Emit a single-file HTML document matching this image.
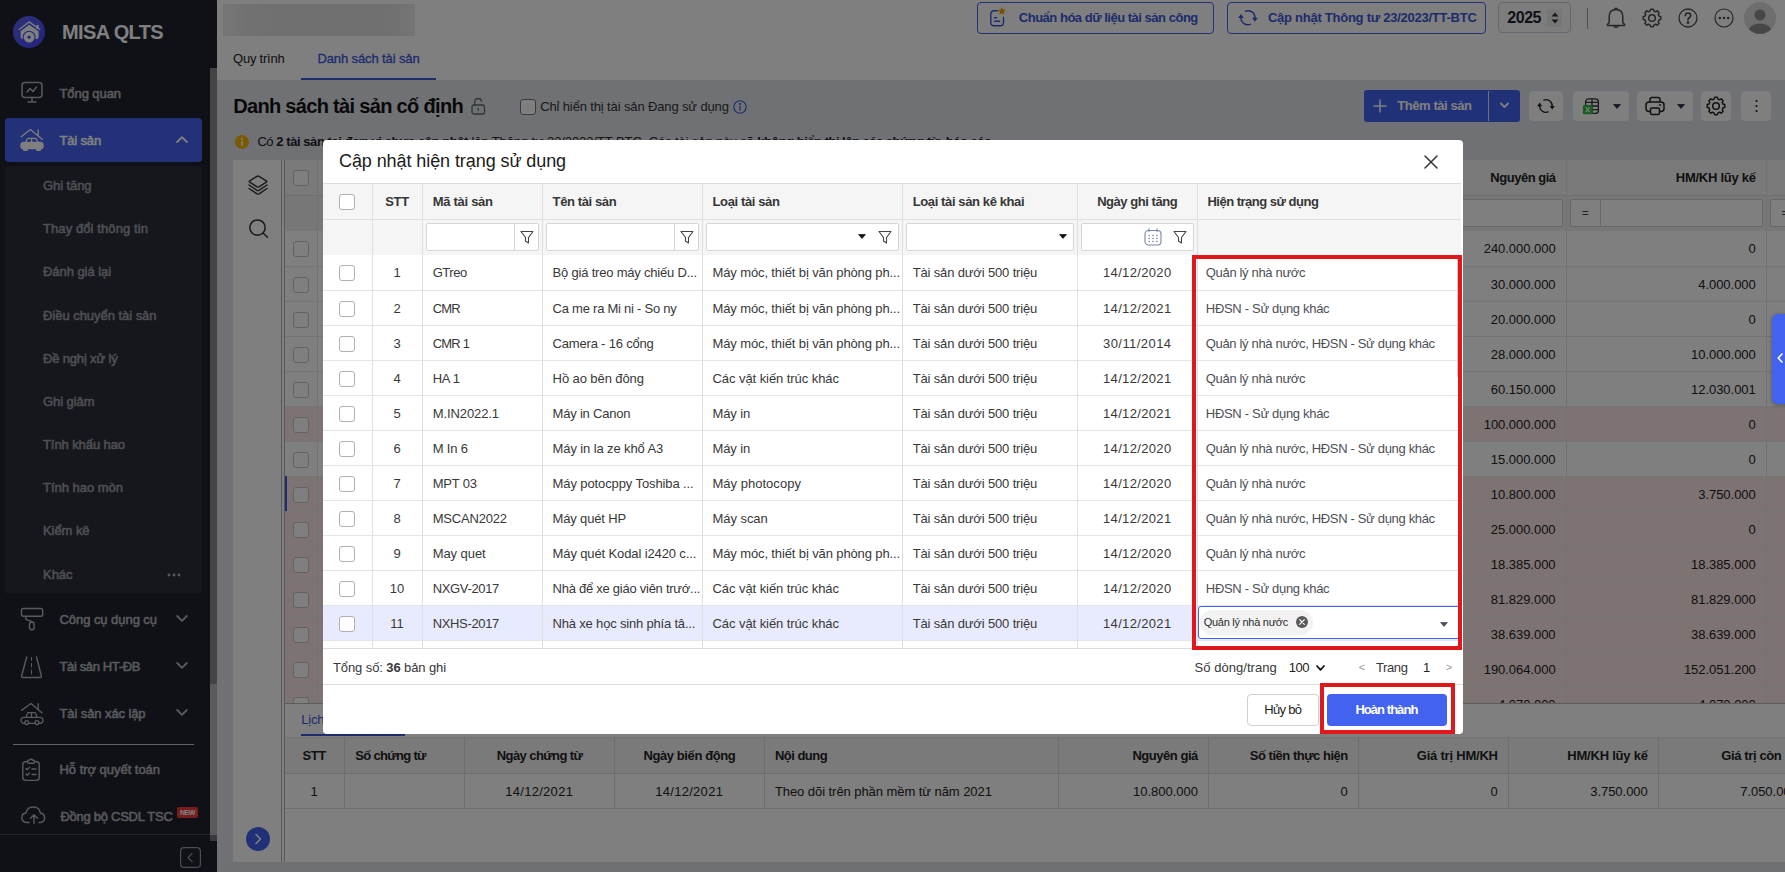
<!DOCTYPE html><html lang="vi"><head><meta charset="utf-8"><title>MISA QLTS</title><style>
*{box-sizing:border-box;margin:0;padding:0}
html,body{width:1785px;height:872px;overflow:hidden;background:#fff}
body{font-family:"Liberation Sans",sans-serif;font-size:13px;color:#1f1f1f;position:relative}
.abs{position:absolute}
.t{position:absolute;white-space:nowrap;line-height:1}
.b{font-weight:bold}
svg{position:absolute;overflow:visible}
#sidebar{position:absolute;left:0;top:0;width:217px;height:872px;background:#20222c}
#main{position:absolute;left:217px;top:0;width:1568px;height:872px;background:#e1e3e9}
#overlay{position:absolute;left:0;top:0;width:1785px;height:872px;background:rgba(0,0,0,.5)}
.sm{color:#9a9daa;font-size:14px}
.mi{color:#b0b3bf;font-size:14px}
#modal{position:absolute;left:323px;top:140px;width:1140px;height:594px;background:#fff;border-radius:4px;overflow:hidden}
.cb{position:absolute;width:16px;height:16px;border:1px solid #afafaf;border-radius:3px;background:#fff}
.vl{position:absolute;width:1px;background:#e0e0e0}
.hl{position:absolute;height:1px;background:#e0e0e0}
.mrow{position:absolute;left:0;width:1134px;height:35px;border-bottom:1px solid #e6e6e6}
.c{position:absolute;top:0;height:34px;line-height:34px;white-space:nowrap;overflow:hidden;text-overflow:ellipsis;font-size:13px;color:#333}
.fi{position:absolute;height:28px;border:1px solid #d6d6d6;border-radius:2px;background:#fff}
.bgc{position:absolute;white-space:nowrap;font-size:13px;color:#212121;line-height:35px;height:35px}
.btn{position:absolute;border-radius:4px;background:#fff;box-shadow:0 0 1px rgba(0,0,0,.15)}
</style></head><body>
<div id="sidebar">
<svg style="left:13px;top:16px" width="32" height="32" viewBox="0 0 32 32"><defs><linearGradient id="lg" x1="0" y1="0" x2="1" y2="1"><stop offset="0" stop-color="#5a66f0"/><stop offset="1" stop-color="#4a44ff"/></linearGradient></defs><circle cx="16" cy="16" r="16" fill="url(#lg)"/><path d="M5.800 13.800 L16.100 5.900 L27.200 13.800" fill="none" stroke="#fff" stroke-width="1.300" stroke-linejoin="round"/><rect x="23.400" y="9" width="2.300" height="3.800" fill="#fff"/><path d="M7.700 15.200 L16.100 8.800 L25.600 15.200 V20.500 Q25.600 23.100 23 23.100 H10.300 Q7.700 23.100 7.700 20.500 Z" fill="#fff"/><circle cx="16.100" cy="21.200" r="6.500" fill="#4d50f5"/><circle cx="16.100" cy="21.200" r="5.400" fill="#fff"/><rect x="14.700" y="19.800" width="2.800" height="2.800" transform="rotate(45 16.100 21.200)" fill="#4d50f5"/></svg>
<div class="t" style="font-size:20px;color:#fff;top:21.5px;font-weight:bold;letter-spacing:-0.630px;left:62.0px;">MISA QLTS</div>
<svg style="left:21px;top:81px" width="24" height="24" viewBox="0 0 24 24" fill="none" stroke="#b0b3bf" stroke-width="1.500" stroke-linecap="round" stroke-linejoin="round"><rect x="1" y="1.500" width="20" height="15" rx="3"/><path d="M6 11 L9 7.500 L12 10.500 L15.500 6"/><path d="M11 16.500 V21 M7 21 H15"/></svg>
<div class="t" style="font-size:13px;color:#b3b5bb;top:86.5px;letter-spacing:-0.075px;left:59.5px;-webkit-text-stroke:0.55px currentColor;">Tổng quan</div>
<div class="abs" style="left:5px;top:118px;width:197px;height:44px;background:#4562f0;border-radius:4px"></div>
<svg style="left:19px;top:127px" width="26" height="26" viewBox="0 0 26 26" fill="none" stroke="#fff" stroke-width="1.300" stroke-linecap="round" stroke-linejoin="round"><path d="M2.200 9.700 L11.400 2.600 L23.500 12.400 M19.200 2.800 V8.600"/><path d="M6.500 15.500 L8.200 12 Q8.600 11.300 9.600 11.300 H15.800 Q16.800 11.300 17.300 12 L19 15.500 M12.600 11.300 V15.500" /><path d="M2 18 Q2 15.500 5 15.500 H21 Q24 15.500 24 18 V19.500 Q24 21.700 21.500 21.700 H4.500 Q2 21.700 2 19.500 Z" fill="#fff"/><path d="M4.800 21.700 V23.300 H8.200 V21.700 M17.800 21.700 V23.300 H21.200 V21.700" fill="#fff"/></svg>
<div class="t" style="font-size:13px;color:#fff;top:133.5px;letter-spacing:-0.163px;left:59.5px;-webkit-text-stroke:0.55px currentColor;">Tài sản</div>
<svg style="left:175.500px;top:136px" width="12" height="7" viewBox="0 0 12 7" fill="none" stroke="#fff" stroke-width="1.900" stroke-linecap="round" stroke-linejoin="round"><path d="M1.200 6 L6 1.200 L10.800 6"/></svg>
<div class="abs" style="left:5px;top:166px;width:197px;height:428px;background:#2c2f3b;border-radius:4px"></div>
<div class="t" style="font-size:13px;color:#9c9ea6;top:178.5px;letter-spacing:-0.082px;left:43.0px;-webkit-text-stroke:0.55px currentColor;">Ghi tăng</div>
<div class="t" style="font-size:13px;color:#9c9ea6;top:221.5px;letter-spacing:0.091px;left:43.0px;-webkit-text-stroke:0.55px currentColor;">Thay đổi thông tin</div>
<div class="t" style="font-size:13px;color:#9c9ea6;top:264.5px;letter-spacing:-0.055px;left:43.0px;-webkit-text-stroke:0.55px currentColor;">Đánh giá lại</div>
<div class="t" style="font-size:13px;color:#9c9ea6;top:308.5px;letter-spacing:-0.036px;left:43.0px;-webkit-text-stroke:0.55px currentColor;">Điều chuyển tài sản</div>
<div class="t" style="font-size:13px;color:#9c9ea6;top:351.5px;letter-spacing:-0.163px;left:43.0px;-webkit-text-stroke:0.55px currentColor;">Đề nghị xử lý</div>
<div class="t" style="font-size:13px;color:#9c9ea6;top:394.5px;letter-spacing:-0.066px;left:43.0px;-webkit-text-stroke:0.55px currentColor;">Ghi giảm</div>
<div class="t" style="font-size:13px;color:#9c9ea6;top:437.5px;letter-spacing:-0.087px;left:43.0px;-webkit-text-stroke:0.55px currentColor;">Tính khấu hao</div>
<div class="t" style="font-size:13px;color:#9c9ea6;top:480.5px;letter-spacing:-0.018px;left:43.0px;-webkit-text-stroke:0.55px currentColor;">Tính hao mòn</div>
<div class="t" style="font-size:13px;color:#9c9ea6;top:524.0px;letter-spacing:-0.067px;left:43.0px;-webkit-text-stroke:0.55px currentColor;">Kiểm kê</div>
<div class="t" style="font-size:13px;color:#9c9ea6;top:567.5px;letter-spacing:-0.035px;left:43.0px;-webkit-text-stroke:0.55px currentColor;">Khác</div>
<svg style="left:167px;top:573px" width="14" height="4" viewBox="0 0 14 4" fill="#b0b3bf"><circle cx="2" cy="2" r="1.400"/><circle cx="7" cy="2" r="1.400"/><circle cx="12" cy="2" r="1.400"/></svg>
<svg style="left:20px;top:606px" width="26" height="26" viewBox="0 0 26 26" fill="none" stroke="#b3b5bb" stroke-width="1.400" stroke-linecap="round" stroke-linejoin="round"><rect x="1.500" y="2.500" width="21.200" height="7.800" rx="1.800"/><path d="M5.800 10.500 V12.300 Q5.800 13.500 7 13.900 L11 15.200 Q11.800 15.500 11.800 16.300"/><rect x="9.500" y="16" width="4.600" height="7.800" rx="2.300"/></svg>
<div class="t" style="font-size:13px;color:#b3b5bb;top:612.5px;letter-spacing:-0.053px;left:59.5px;-webkit-text-stroke:0.55px currentColor;">Công cụ dụng cụ</div>
<svg style="left:175.500px;top:615.2px" width="12" height="7" viewBox="0 0 12 7" fill="none" stroke="#b3b5bb" stroke-width="1.900" stroke-linecap="round" stroke-linejoin="round"><path d="M1.200 1 L6 5.800 L10.800 1"/></svg>
<svg style="left:19px;top:655px" width="26" height="26" viewBox="0 0 26 26" fill="none" stroke="#b3b5bb" stroke-width="1.400" stroke-linecap="round" stroke-linejoin="round"><path d="M7.700 2 L2.600 21 Q2.300 22.500 3.800 22.500 H21.200 Q22.700 22.500 22.400 21 L17.500 2"/><path d="M12.500 2.500 V5.500 M12.500 8.500 V12 M12.500 15 V19" stroke-width="1"/></svg>
<div class="t" style="font-size:13px;color:#b3b5bb;top:659.5px;letter-spacing:-0.365px;left:59.5px;-webkit-text-stroke:0.55px currentColor;">Tài sản HT-ĐB</div>
<svg style="left:175.500px;top:662.2px" width="12" height="7" viewBox="0 0 12 7" fill="none" stroke="#b3b5bb" stroke-width="1.900" stroke-linecap="round" stroke-linejoin="round"><path d="M1.200 1 L6 5.800 L10.800 1"/></svg>
<svg style="left:19px;top:700px" width="26" height="26" viewBox="0 0 26 26" fill="none" stroke="#b3b5bb" stroke-width="1.300" stroke-linecap="round" stroke-linejoin="round"><path d="M2.500 10.400 L12 3.500 L23.100 13 M19.200 3.700 V9.500"/><path d="M7 17.300 L8.300 13.600 Q8.600 12.600 9.600 12.600 H15.400 Q16.400 12.600 16.800 13.600 L18 17.300 M12.500 12.600 V17.300"/><rect x="2" y="17.300" width="22" height="6" rx="3"/><circle cx="7.700" cy="22.600" r="1.900" fill="#20222c"/><circle cx="18" cy="22.600" r="1.900" fill="#20222c"/></svg>
<div class="t" style="font-size:13px;color:#b3b5bb;top:706.5px;letter-spacing:-0.096px;left:59.5px;-webkit-text-stroke:0.55px currentColor;">Tài sản xác lập</div>
<svg style="left:175.500px;top:709.2px" width="12" height="7" viewBox="0 0 12 7" fill="none" stroke="#b3b5bb" stroke-width="1.900" stroke-linecap="round" stroke-linejoin="round"><path d="M1.200 1 L6 5.800 L10.800 1"/></svg>
<div class="abs" style="left:13px;top:744px;width:181px;height:1px;background:#c4c4c8"></div>
<svg style="left:20px;top:756px" width="22" height="26" viewBox="0 0 22 26" fill="none" stroke="#b3b5bb" stroke-width="1.400" stroke-linecap="round" stroke-linejoin="round"><rect x="2.800" y="5.800" width="16.400" height="18.600" rx="2.800"/><path d="M7.500 5.800 V5 Q7.500 4.300 8.500 4.300 H9.300 Q9.800 3 11 3 Q12.200 3 12.700 4.300 H13.500 Q14.500 4.300 14.500 5 V5.800 Q14.500 7.300 13.500 7.300 H8.500 Q7.500 7.300 7.500 5.800 Z" fill="#20222c"/><path d="M6 12.500 l1.300 1.300 l2.200 -2.400 M12 13 H16 M6 18 l1.300 1.300 l2.200 -2.400 M12 18.500 H16"/></svg>
<div class="t" style="font-size:13px;color:#b3b5bb;top:762.5px;letter-spacing:-0.031px;left:59.5px;-webkit-text-stroke:0.55px currentColor;">Hỗ trợ quyết toán</div>
<svg style="left:20px;top:805px" width="26" height="20" viewBox="0 0 26 20" fill="none" stroke="#b3b5bb" stroke-width="1.400" stroke-linecap="round" stroke-linejoin="round"><path d="M9 17.500 H6.500 Q1.800 17 1.800 12.500 Q1.800 8.500 6 8 Q7 2 13.300 2 Q19.500 2 20.300 8 Q24.600 8.500 24.600 13 Q24.600 17 20.500 17.500 H19"/><path d="M14 18.400 V10 M10.500 13.300 L14 9.800 L17.500 13.300"/></svg>
<div class="t" style="font-size:13px;color:#b3b5bb;top:809.5px;letter-spacing:-0.271px;left:60.5px;-webkit-text-stroke:0.55px currentColor;">Đồng bộ CSDL TSC</div>
<div class="abs" style="left:177px;top:807px;width:21px;height:11px;background:#f03a3a;border-radius:2px"></div>
<div class="t" style="font-size:7px;color:#fff;top:808.8px;font-weight:bold;letter-spacing:-0.448px;left:180.0px;">NEW</div>
<div class="abs" style="left:0;top:834px;width:210px;height:1px;background:#4a4c55"></div>
<svg style="left:179.500px;top:847px" width="21" height="21" viewBox="0 0 21 21" fill="none" stroke="#9a9ca6" stroke-width="1.200" stroke-linecap="round" stroke-linejoin="round"><rect x="0.600" y="0.600" width="19.800" height="19.800" rx="3.500"/><path d="M12 6.300 L8 10.500 L12 14.700"/></svg>
<div class="abs" style="left:210px;top:68px;width:7px;height:616px;background:#898989"></div>
<div class="abs" style="left:210px;top:684px;width:7px;height:151px;background:#b4b4b4"></div>
<div class="abs" style="left:210px;top:835px;width:7px;height:6px;background:#727272"></div>
</div>
<div id="main">
<div class="abs" style="left:0;top:0;width:1568px;height:80px;background:#fff"></div>
<div class="abs" style="left:6px;top:4px;width:192px;height:32px;background:linear-gradient(90deg,#eeeeee 0,#e2e2e2 14%,#e0e0e0 50%,#e0e0e0 84%,#eaeaea 100%)"></div>
<div class="abs" style="left:760px;top:2px;width:237px;height:32px;border:1px solid #4262f0;border-radius:4px"></div>
<svg style="left:772px;top:6px" width="18" height="22" viewBox="0 0 18 22" fill="none" stroke="#3b57d8" stroke-width="1.400" stroke-linecap="round" stroke-linejoin="round"><path d="M8.500 4.800 H5.300 Q1.800 4.800 1.800 8.300 V16.200 Q1.800 19.700 5.300 19.700 H11 Q14.500 19.700 14.500 16.200 V11.500"/><path d="M5.600 11.800 H7.600 M5.600 15.200 H10.600"/><path d="M12.900 0.900 l1.250 2.550 l2.800 .4 l-2.050 1.980 l.48 2.800 l-2.480 -1.320 l-2.480 1.320 l.48 -2.800 l-2.050 -1.980 l2.800 -.4 z" fill="#f0a20c" stroke="none"/></svg>
<div class="t" style="font-size:13px;color:#3b57d8;top:11.4px;font-weight:bold;letter-spacing:-0.487px;left:801.8px;">Chuẩn hóa dữ liệu tài sản công</div>
<div class="abs" style="left:1010px;top:2px;width:259px;height:32px;border:1px solid #4262f0;border-radius:4px"></div>
<svg style="left:1021px;top:10px" width="20" height="15.50" viewBox="0 0 20 15.500"><g fill="none" stroke="#3b57d8" stroke-width="1.5"><path d="M7 1.400 A7 7 0 0 1 16.950 8.200"/><path d="M12.900 14.100 A7 7 0 0 1 2.950 7.400"/></g><path d="M14.100 7.700 H19.800 L16.950 11.800 Z M0.100 8 H5.800 L2.950 3.900 Z" fill="#3b57d8"/></svg>
<div class="t" style="font-size:13px;color:#3b57d8;top:11.4px;font-weight:bold;letter-spacing:-0.251px;left:1050.9px;">Cập nhật Thông tư 23/2023/TT-BTC</div>
<div class="abs" style="left:1281px;top:2px;width:73px;height:31px;border:1px solid #c9cde0;border-radius:4px;background:#fbfbfb"></div>
<div class="t" style="font-size:16px;color:#1e1e2e;top:10.1px;font-weight:bold;letter-spacing:-0.473px;left:1290.3px;">2025</div>
<div class="abs" style="left:1330px;top:9px;width:15px;height:18px;background:#efefef"></div>
<svg style="left:1333.5px;top:12px" width="8" height="12" viewBox="0 0 8 12" fill="#333"><path d="M4 0.500 L7.500 4.500 H0.500 Z M4 11.500 L7.500 7.500 H0.500 Z"/></svg>
<div class="abs" style="left:1370px;top:8px;width:1px;height:21px;background:#a0a0a0"></div>
<svg style="left:1389px;top:7px" width="20" height="22" viewBox="0 0 20 22" fill="none" stroke="#4c4c50" stroke-width="1.500" stroke-linecap="round" stroke-linejoin="round"><path d="M3.200 15.500 V9.800 Q3.200 2.600 10 2.600 Q16.800 2.600 16.800 9.800 V15.500 L18.500 17.400 Q19 18.500 17.800 18.500 H2.200 Q1 18.500 1.500 17.400 Z"/><path d="M8.800 2.600 Q8.900 1.300 10 1.300 Q11.100 1.300 11.200 2.600"/><path d="M8.200 19.700 Q10 21 11.800 19.700"/></svg>
<svg style="left:1425px;top:8px" width="20" height="20" viewBox="0 0 20 20" fill="none" stroke="#4c4c50" stroke-width="1.500" stroke-linejoin="round"><path d="M8.75 1.19 L11.25 1.19 L11.95 3.07 L13.52 3.72 L15.34 2.88 L17.12 4.66 L16.28 6.48 L16.93 8.05 L18.81 8.75 L18.81 11.25 L16.93 11.95 L16.28 13.52 L17.12 15.34 L15.34 17.12 L13.52 16.28 L11.95 16.93 L11.25 18.81 L8.75 18.81 L8.05 16.93 L6.48 16.28 L4.66 17.12 L2.88 15.34 L3.72 13.52 L3.07 11.95 L1.19 11.25 L1.19 8.75 L3.07 8.05 L3.72 6.48 L2.88 4.66 L4.66 2.88 L6.48 3.72 L8.05 3.07 Z"/><circle cx="10" cy="10" r="3.300"/></svg>
<svg style="left:1461px;top:8px" width="20" height="20" viewBox="0 0 20 20" fill="none" stroke="#4c4c50" stroke-width="1.300" stroke-linecap="round"><circle cx="10" cy="10" r="9"/><path d="M7.300 7.600 Q7.400 5 10 5 Q12.700 5 12.700 7.400 Q12.700 9 10.800 10 Q10 10.500 10 12" stroke-width="1.600"/><circle cx="10" cy="14.600" r="0.800" fill="#4c4c50"/></svg>
<svg style="left:1497px;top:8px" width="20" height="20" viewBox="0 0 20 20" fill="none" stroke="#4c4c50" stroke-width="1.200"><circle cx="10" cy="10" r="9"/><circle cx="5.800" cy="10" r="0.700" fill="#4c4c50"/><circle cx="10" cy="10" r="0.700" fill="#4c4c50"/><circle cx="14.200" cy="10" r="0.700" fill="#4c4c50"/></svg>
<svg style="left:1527px;top:2px" width="32" height="32" viewBox="0 0 32 32"><defs><clipPath id="av"><circle cx="16" cy="16" r="16"/></clipPath></defs><circle cx="16" cy="16" r="16" fill="#dcdcdc"/><g clip-path="url(#av)" fill="#8f8f93"><circle cx="16" cy="13" r="5.600"/><ellipse cx="16" cy="29" rx="11.500" ry="7.500"/></g></svg>
<div class="t" style="font-size:13px;color:#212121;top:51.6px;letter-spacing:-0.241px;left:16.1px;">Quy trình</div>
<div class="t" style="font-size:13px;color:#3b57d8;top:51.6px;letter-spacing:-0.122px;left:100.5px;-webkit-text-stroke:0.3px currentColor;">Danh sách tài sản</div>
<div class="abs" style="left:84px;top:78px;width:135px;height:2px;background:#3f5be0"></div>
<div class="t" style="font-size:20px;color:#111;top:96.3px;font-weight:bold;letter-spacing:-0.677px;left:16.2px;">Danh sách tài sản cố định</div>
<svg style="left:254px;top:97px" width="15" height="18" viewBox="0 0 15 18" fill="none" stroke="#666" stroke-width="1.300" stroke-linecap="round" stroke-linejoin="round"><rect x="1" y="8" width="12.500" height="9" rx="2"/><path d="M3.700 8 V5 Q3.700 1.500 7 1.500 Q10 1.500 10.500 4"/><path d="M7.200 11.500 V13.500"/></svg>
<div class="cb" style="left:303px;top:99px;width:16px;height:16px;border-color:#777"></div>
<div class="t" style="font-size:13px;color:#333;top:99.6px;letter-spacing:-0.133px;left:323.2px;">Chỉ hiển thị tài sản Đang sử dụng</div>
<svg style="left:516px;top:99.600px" width="14" height="14" viewBox="0 0 14 14" fill="none" stroke="#3b57d8" stroke-width="1.100" stroke-linecap="round"><circle cx="7" cy="7" r="6.200"/><path d="M7 6.300 V10.300"/><circle cx="7" cy="4" r="0.500" fill="#3b57d8"/></svg>
<div class="abs" style="left:1147px;top:90px;width:156px;height:32px;background:#4262f0;border-radius:3px"></div>
<div class="abs" style="left:1271px;top:91px;width:1px;height:30px;background:#dfe3f5"></div>
<svg style="left:1156px;top:99px" width="14" height="14" viewBox="0 0 14 14" fill="none" stroke="#fff" stroke-width="1.500" stroke-linecap="round"><path d="M7 1 V13 M1 7 H13"/></svg>
<div class="t" style="font-size:13px;color:#fff;top:98.8px;font-weight:bold;letter-spacing:-0.431px;left:1180.3px;">Thêm tài sản</div>
<svg style="left:1283px;top:102px" width="9" height="7" viewBox="0 0 9 7" fill="none" stroke="#fff" stroke-width="1.800" stroke-linecap="round" stroke-linejoin="round"><path d="M1 1.500 L4.500 5 L8 1.500"/></svg>
<div class="btn" style="left:1312px;top:91px;width:34px;height:30px"></div>
<svg style="left:1320px;top:98.8px" width="18" height="13.95" viewBox="0 0 20 15.500"><g fill="none" stroke="#222" stroke-width="1.5"><path d="M7 1.400 A7 7 0 0 1 16.950 8.200"/><path d="M12.900 14.100 A7 7 0 0 1 2.950 7.400"/></g><path d="M14.100 7.700 H19.800 L16.950 11.800 Z M0.100 8 H5.800 L2.950 3.900 Z" fill="#222"/></svg>
<div class="btn" style="left:1356px;top:91px;width:56px;height:30px"></div>
<svg style="left:1365px;top:97px" width="18" height="18" viewBox="0 0 18 18" fill="none" stroke="#333" stroke-width="1.300" stroke-linejoin="round"><rect x="3.600" y="1.800" width="12.800" height="14.600" rx="3"/><path d="M3.600 5.400 H16.400 M3.600 9 H16.400 M3.600 12.600 H16.400 M10 1.800 V16.400"/><rect x="0.900" y="8.200" width="9.700" height="9" rx="0.800" fill="#2fbf45" stroke="none"/><path d="M3.700 10.300 L7.700 15.200 M7.700 10.300 L3.700 15.200" stroke="#fff" stroke-width="1.100"/></svg>
<svg style="left:1395.5px;top:104px" width="8" height="5" viewBox="0 0 8 5" fill="#2a2f45"><path d="M0.500 0.500 H7.500 L4 4.500 Z" stroke="#2a2f45" stroke-width="0.800" stroke-linejoin="round"/></svg>
<div class="btn" style="left:1420px;top:91px;width:56px;height:30px"></div>
<svg style="left:1428px;top:96px" width="20" height="20" viewBox="0 0 20 20" fill="none" stroke="#222" stroke-width="1.500" stroke-linejoin="round" stroke-linecap="round"><path d="M5 6 V3.500 Q5 1.500 7 1.500 H13 Q15 1.500 15 3.500 V6"/><rect x="1" y="6" width="18" height="9.500" rx="3"/><rect x="5.500" y="12" width="9" height="6.500" rx="1.500" fill="#fff"/><path d="M14.500 9 H15.500"/></svg>
<svg style="left:1459.5px;top:104px" width="8" height="5" viewBox="0 0 8 5" fill="#2a2f45"><path d="M0.500 0.500 H7.500 L4 4.500 Z" stroke="#2a2f45" stroke-width="0.800" stroke-linejoin="round"/></svg>
<div class="btn" style="left:1484px;top:91px;width:30px;height:30px"></div>
<svg style="left:1489px;top:96px" width="20" height="20" viewBox="0 0 20 20" fill="none" stroke="#222" stroke-width="1.500" stroke-linejoin="round"><path d="M8.75 1.19 L11.25 1.19 L11.95 3.07 L13.52 3.72 L15.34 2.88 L17.12 4.66 L16.28 6.48 L16.93 8.05 L18.81 8.75 L18.81 11.25 L16.93 11.95 L16.28 13.52 L17.12 15.34 L15.34 17.12 L13.52 16.28 L11.95 16.93 L11.25 18.81 L8.75 18.81 L8.05 16.93 L6.48 16.28 L4.66 17.12 L2.88 15.34 L3.72 13.52 L3.07 11.95 L1.19 11.25 L1.19 8.75 L3.07 8.05 L3.72 6.48 L2.88 4.66 L4.66 2.88 L6.48 3.72 L8.05 3.07 Z"/><circle cx="10" cy="10" r="3.300"/></svg>
<div class="btn" style="left:1524px;top:91px;width:30px;height:30px"></div>
<svg style="left:1538px;top:99px" width="3" height="14" viewBox="0 0 3 14" fill="#222"><circle cx="1.500" cy="2" r="1.100"/><circle cx="1.500" cy="7" r="1.100"/><circle cx="1.500" cy="12" r="1.100"/></svg>
<svg style="left:17.5px;top:135px" width="14" height="14" viewBox="0 0 14 14"><circle cx="7" cy="7" r="7" fill="#f5b50a"/><rect x="6.200" y="6" width="1.600" height="4.800" fill="#fff"/><circle cx="7" cy="4" r="1" fill="#fff"/></svg>
<div class="t" style="left:40.39999999999998px;top:135px;font-size:13px;color:#222;white-space:pre"><span style="letter-spacing:-0.445px">Có </span><b style="letter-spacing:-0.438px">2 tài sản tại đơn vị chưa cập nhật</b><span style="letter-spacing:-0.109px"> lên Thông tư 23/2023/TT-BTC. Các tài sản này sẽ </span><b style="letter-spacing:-0.500px">không hiển thị lên các chứng từ, báo cáo</b></div>
<div class="abs" style="left:16px;top:160px;width:1552px;height:702px;background:#fff"></div>
<div class="abs" style="left:64px;top:160px;width:1px;height:702px;background:#b4b4b4"></div>
<div class="abs" style="left:67px;top:160px;width:1px;height:702px;background:#b4b4b4"></div>
<svg style="left:31px;top:175px" width="20" height="20" viewBox="0 0 20 20" fill="none" stroke="#333" stroke-width="1.400" stroke-linejoin="round" stroke-linecap="round"><path d="M9 1.300 Q10 0.700 11 1.300 L18.300 5.800 Q19.300 6.500 18.300 7.200 L11 11.800 Q10 12.400 9 11.800 L1.700 7.200 Q0.700 6.500 1.700 5.800 Z"/><path d="M1 10 L9 15.300 Q10 15.900 11 15.300 L19 10 M1 13.500 L9 18.800 Q10 19.400 11 18.800 L19 13.500"/></svg>
<svg style="left:31px;top:218px" width="21" height="21" viewBox="0 0 21 21" fill="none" stroke="#333" stroke-width="1.500" stroke-linecap="round"><circle cx="9.500" cy="9.600" r="7.700"/><path d="M15.200 15.300 L19.500 19.300"/></svg>
<div class="abs" style="left:68px;top:160px;width:1500px;height:35px;background:#f5f5f5"></div>
<div class="abs" style="left:68px;top:195px;width:1500px;height:1px;background:#dedede"></div>
<div class="abs" style="left:68px;top:196px;width:1500px;height:35px;background:#efefef"></div>
<div class="abs" style="left:68px;top:231px;width:1500px;height:472px;overflow:hidden">
<div class="abs" style="left:0;top:0px;width:1500px;height:36px;background:#fff;border-bottom:1px solid #e9e9e9"></div>
<div class="cb" style="left:8px;top:10.2px;border-color:#c6c6c6"></div>
<div class="t" style="font-size:13px;color:#212121;top:11.2px;letter-spacing:-0.033px;left:1198.7px;">240.000.000</div>
<div class="t" style="font-size:13px;color:#212121;top:11.2px;letter-spacing:-0.036px;left:1463.6px;">0</div>
<div class="abs" style="left:0;top:36px;width:1500px;height:35px;background:#fff;border-bottom:1px solid #e9e9e9"></div>
<div class="cb" style="left:8px;top:46.0px;border-color:#c6c6c6"></div>
<div class="t" style="font-size:13px;color:#212121;top:47.0px;letter-spacing:-0.033px;left:1205.8px;">30.000.000</div>
<div class="t" style="font-size:13px;color:#212121;top:47.0px;letter-spacing:-0.032px;left:1413.2px;">4.000.000</div>
<div class="abs" style="left:0;top:71px;width:1500px;height:35px;background:#fff;border-bottom:1px solid #e9e9e9"></div>
<div class="cb" style="left:8px;top:81.0px;border-color:#c6c6c6"></div>
<div class="t" style="font-size:13px;color:#212121;top:82.0px;letter-spacing:-0.033px;left:1205.8px;">20.000.000</div>
<div class="t" style="font-size:13px;color:#212121;top:82.0px;letter-spacing:-0.036px;left:1463.6px;">0</div>
<div class="abs" style="left:0;top:106px;width:1500px;height:35px;background:#fff;border-bottom:1px solid #e9e9e9"></div>
<div class="cb" style="left:8px;top:116.0px;border-color:#c6c6c6"></div>
<div class="t" style="font-size:13px;color:#212121;top:117.0px;letter-spacing:-0.033px;left:1205.8px;">28.000.000</div>
<div class="t" style="font-size:13px;color:#212121;top:117.0px;letter-spacing:-0.033px;left:1406.0px;">10.000.000</div>
<div class="abs" style="left:0;top:141px;width:1500px;height:35px;background:#fff;border-bottom:1px solid #e9e9e9"></div>
<div class="cb" style="left:8px;top:151.0px;border-color:#c6c6c6"></div>
<div class="t" style="font-size:13px;color:#212121;top:152.0px;letter-spacing:-0.033px;left:1205.8px;">60.150.000</div>
<div class="t" style="font-size:13px;color:#212121;top:152.0px;letter-spacing:-0.033px;left:1406.0px;">12.030.001</div>
<div class="abs" style="left:0;top:176px;width:1500px;height:35px;background:#fbe7e5;border-bottom:1px solid #e9e9e9"></div>
<div class="cb" style="left:8px;top:186.0px;border-color:#c6c6c6"></div>
<div class="t" style="font-size:13px;color:#212121;top:187.0px;letter-spacing:-0.033px;left:1198.7px;">100.000.000</div>
<div class="t" style="font-size:13px;color:#212121;top:187.0px;letter-spacing:-0.036px;left:1463.6px;">0</div>
<div class="abs" style="left:0;top:211px;width:1500px;height:35px;background:#fff;border-bottom:1px solid #e9e9e9"></div>
<div class="cb" style="left:8px;top:221.0px;border-color:#c6c6c6"></div>
<div class="t" style="font-size:13px;color:#212121;top:222.0px;letter-spacing:-0.033px;left:1205.8px;">15.000.000</div>
<div class="t" style="font-size:13px;color:#212121;top:222.0px;letter-spacing:-0.036px;left:1463.6px;">0</div>
<div class="abs" style="left:0;top:246px;width:1500px;height:35px;background:#fbe7e5;border-bottom:1px solid #e9e9e9"></div>
<div class="cb" style="left:8px;top:256.0px;border-color:#c6c6c6"></div>
<div class="t" style="font-size:13px;color:#212121;top:257.0px;letter-spacing:-0.033px;left:1205.8px;">10.800.000</div>
<div class="t" style="font-size:13px;color:#212121;top:257.0px;letter-spacing:-0.032px;left:1413.2px;">3.750.000</div>
<div class="abs" style="left:0;top:281px;width:1500px;height:35px;background:#fbe7e5;border-bottom:1px solid #e9e9e9"></div>
<div class="cb" style="left:8px;top:291.0px;border-color:#c6c6c6"></div>
<div class="t" style="font-size:13px;color:#212121;top:292.0px;letter-spacing:-0.033px;left:1205.8px;">25.000.000</div>
<div class="t" style="font-size:13px;color:#212121;top:292.0px;letter-spacing:-0.036px;left:1463.6px;">0</div>
<div class="abs" style="left:0;top:316px;width:1500px;height:35px;background:#fbe7e5;border-bottom:1px solid #e9e9e9"></div>
<div class="cb" style="left:8px;top:326.0px;border-color:#c6c6c6"></div>
<div class="t" style="font-size:13px;color:#212121;top:327.0px;letter-spacing:-0.033px;left:1205.8px;">18.385.000</div>
<div class="t" style="font-size:13px;color:#212121;top:327.0px;letter-spacing:-0.033px;left:1406.0px;">18.385.000</div>
<div class="abs" style="left:0;top:351px;width:1500px;height:35px;background:#fbe7e5;border-bottom:1px solid #e9e9e9"></div>
<div class="cb" style="left:8px;top:361.0px;border-color:#c6c6c6"></div>
<div class="t" style="font-size:13px;color:#212121;top:362.0px;letter-spacing:-0.033px;left:1205.8px;">81.829.000</div>
<div class="t" style="font-size:13px;color:#212121;top:362.0px;letter-spacing:-0.033px;left:1406.0px;">81.829.000</div>
<div class="abs" style="left:0;top:386px;width:1500px;height:35px;background:#fbe7e5;border-bottom:1px solid #e9e9e9"></div>
<div class="cb" style="left:8px;top:396.0px;border-color:#c6c6c6"></div>
<div class="t" style="font-size:13px;color:#212121;top:397.0px;letter-spacing:-0.033px;left:1205.8px;">38.639.000</div>
<div class="t" style="font-size:13px;color:#212121;top:397.0px;letter-spacing:-0.033px;left:1406.0px;">38.639.000</div>
<div class="abs" style="left:0;top:421px;width:1500px;height:35px;background:#fbe7e5;border-bottom:1px solid #e9e9e9"></div>
<div class="cb" style="left:8px;top:431.0px;border-color:#c6c6c6"></div>
<div class="t" style="font-size:13px;color:#212121;top:432.0px;letter-spacing:-0.033px;left:1198.7px;">190.064.000</div>
<div class="t" style="font-size:13px;color:#212121;top:432.0px;letter-spacing:-0.033px;left:1398.9px;">152.051.200</div>
<div class="abs" style="left:0;top:456px;width:1500px;height:35px;background:#fbe7e5;border-bottom:1px solid #e9e9e9"></div>
<div class="cb" style="left:8px;top:466.0px;border-color:#c6c6c6"></div>
<div class="t" style="font-size:13px;color:#212121;top:467.0px;letter-spacing:-0.032px;left:1213.0px;">4.070.000</div>
<div class="t" style="font-size:13px;color:#212121;top:467.0px;letter-spacing:-0.032px;left:1413.2px;">4.070.000</div>
</div>
<div class="abs" style="left:68px;top:476px;width:2px;height:35px;background:#3f5be0"></div>
<div class="cb" style="left:76px;top:170px;border-color:#c6c6c6"></div>
<div class="abs" style="left:100px;top:160px;width:1px;height:543px;background:#e4e4e4"></div>
<div class="abs" style="left:1349px;top:160px;width:1px;height:543px;background:#e4e4e4"></div>
<div class="abs" style="left:1549px;top:160px;width:1px;height:543px;background:#e4e4e4"></div>
<div class="t" style="font-size:13px;color:#222;top:170.5px;font-weight:bold;letter-spacing:-0.478px;left:1273.3px;">Nguyên giá</div>
<div class="t" style="font-size:13px;color:#222;top:170.5px;font-weight:bold;letter-spacing:-0.257px;left:1458.8px;">HM/KH lũy kế</div>
<div class="abs" style="left:1083px;top:199px;width:263px;height:28px;border:1px solid #d0d0d0;border-radius:2px;background:#fff"></div>
<div class="abs" style="left:1353px;top:199px;width:193px;height:28px;border:1px solid #d0d0d0;border-radius:2px;background:#fff"></div>
<div class="abs" style="left:1383px;top:199px;width:1px;height:28px;background:#d0d0d0"></div>
<div class="t" style="font-size:12px;color:#444;top:206.5px;left:1364.7px;">=</div>
<div class="abs" style="left:1553px;top:199px;width:30px;height:28px;border:1px solid #d0d0d0;border-radius:2px;background:#fff"></div>
<div class="t" style="font-size:12px;color:#444;top:206.5px;left:1564.5px;">=</div>
<div class="abs" style="left:68px;top:703px;width:1500px;height:1px;background:#b8b8b8"></div>
<div class="t" style="font-size:13px;color:#3b57d8;top:712.8px;letter-spacing:-0.199px;left:84.2px;">Lịch sử biến động</div>
<div class="abs" style="left:84px;top:734px;width:104px;height:2px;background:#3f5be0"></div>
<div class="abs" style="left:68px;top:737px;width:1500px;height:37px;background:#f5f5f5;border-bottom:1px solid #dcdcdc;border-top:1px solid #e4e4e4"></div>
<div class="abs" style="left:68px;top:774px;width:1500px;height:35px;background:#fff;border-bottom:1px solid #dcdcdc"></div>
<div class="abs" style="left:127px;top:737px;width:1px;height:72px;background:#dcdcdc"></div>
<div class="abs" style="left:247px;top:737px;width:1px;height:72px;background:#dcdcdc"></div>
<div class="abs" style="left:397px;top:737px;width:1px;height:72px;background:#dcdcdc"></div>
<div class="abs" style="left:547px;top:737px;width:1px;height:72px;background:#dcdcdc"></div>
<div class="abs" style="left:841px;top:737px;width:1px;height:72px;background:#dcdcdc"></div>
<div class="abs" style="left:991px;top:737px;width:1px;height:72px;background:#dcdcdc"></div>
<div class="abs" style="left:1141px;top:737px;width:1px;height:72px;background:#dcdcdc"></div>
<div class="abs" style="left:1291px;top:737px;width:1px;height:72px;background:#dcdcdc"></div>
<div class="abs" style="left:1441px;top:737px;width:1px;height:72px;background:#dcdcdc"></div>
<div class="t" style="font-size:13px;color:#222;top:748.8px;font-weight:bold;letter-spacing:-0.421px;left:85.5px;">STT</div>
<div class="t" style="font-size:13px;color:#222;top:748.8px;font-weight:bold;letter-spacing:-0.677px;left:138.2px;">Số chứng từ</div>
<div class="t" style="font-size:13px;color:#222;top:748.8px;font-weight:bold;letter-spacing:-0.587px;left:279.8px;">Ngày chứng từ</div>
<div class="t" style="font-size:13px;color:#222;top:748.8px;font-weight:bold;letter-spacing:-0.393px;left:426.4px;">Ngày biến động</div>
<div class="t" style="font-size:13px;color:#222;top:748.8px;font-weight:bold;letter-spacing:-0.516px;left:557.9px;">Nội dung</div>
<div class="t" style="font-size:13px;color:#222;top:748.8px;font-weight:bold;letter-spacing:-0.458px;left:915.4px;">Nguyên giá</div>
<div class="t" style="font-size:13px;color:#222;top:748.8px;font-weight:bold;letter-spacing:-0.483px;left:1032.8px;">Số tiền thực hiện</div>
<div class="t" style="font-size:13px;color:#222;top:748.8px;font-weight:bold;letter-spacing:-0.215px;left:1199.8px;">Giá trị HM/KH</div>
<div class="t" style="font-size:13px;color:#222;top:748.8px;font-weight:bold;letter-spacing:-0.215px;left:1350.3px;">HM/KH lũy kế</div>
<div class="t" style="font-size:13px;color:#222;top:748.8px;font-weight:bold;letter-spacing:-0.371px;left:1504.2px;">Giá trị còn lại</div>
<div class="t" style="font-size:13px;color:#222;top:784.8px;left:93.4px;">1</div>
<div class="t" style="font-size:13px;color:#222;top:784.8px;letter-spacing:0.292px;left:288.2px;">14/12/2021</div>
<div class="t" style="font-size:13px;color:#222;top:784.8px;letter-spacing:0.292px;left:438.2px;">14/12/2021</div>
<div class="t" style="font-size:13px;color:#222;top:784.8px;letter-spacing:-0.059px;left:557.9px;">Theo dõi trên phần mềm từ năm 2021</div>
<div class="t" style="font-size:13px;color:#222;top:784.8px;letter-spacing:-0.033px;left:916.1px;">10.800.000</div>
<div class="t" style="font-size:13px;color:#222;top:784.8px;letter-spacing:-0.036px;left:1123.6px;">0</div>
<div class="t" style="font-size:13px;color:#222;top:784.8px;letter-spacing:-0.036px;left:1273.6px;">0</div>
<div class="t" style="font-size:13px;color:#222;top:784.8px;letter-spacing:-0.032px;left:1373.2px;">3.750.000</div>
<div class="t" style="font-size:13px;color:#222;top:784.8px;letter-spacing:-0.032px;left:1523.2px;">7.050.000</div>
<svg style="left:29px;top:827px" width="24" height="24" viewBox="0 0 24 24"><circle cx="12" cy="12" r="12" fill="#4262f0"/><path d="M10 7.500 L14.500 12 L10 16.500" fill="none" stroke="#fff" stroke-width="1.600" stroke-linecap="round" stroke-linejoin="round"/></svg>
<div class="abs" style="left:0;top:862px;width:1568px;height:10px;background:#dfe1e5"></div>
</div>
<div id="overlay"></div>
<div class="abs" style="left:1772px;top:314px;width:20px;height:90px;background:#4262f0;border-radius:6px;box-shadow:0 1px 4px rgba(0,0,0,.35)"></div><svg style="left:1777px;top:353px" width="6" height="10" viewBox="0 0 6 10" fill="none" stroke="#fff" stroke-width="1.600" stroke-linecap="round" stroke-linejoin="round"><path d="M5 1 L1.200 5 L5 9"/></svg>
<div id="modal">
<div class="t" style="font-size:18px;color:#1b1b1b;top:11.5px;letter-spacing:-0.082px;left:16.0px;">Cập nhật hiện trạng sử dụng</div>
<svg style="left:1101px;top:15px" width="14" height="14" viewBox="0 0 14 14" fill="none" stroke="#333" stroke-width="1.500" stroke-linecap="round"><path d="M1 1 L13 13 M13 1 L1 13"/></svg>
<div class="abs" style="left:0;top:43px;width:1138px;height:72px;background:#f5f5f5;border-top:1px solid #dcdcdc"></div>
<div class="hl" style="left:0;top:79px;width:1138px"></div>
<div class="cb" style="left:16px;top:54px"></div>
<div class="t" style="font-size:13px;color:#363636;top:55.0px;font-weight:bold;letter-spacing:-0.388px;left:62.3px;">STT</div>
<div class="t" style="font-size:13px;color:#363636;top:55.0px;font-weight:bold;letter-spacing:-0.286px;left:109.7px;">Mã tài sản</div>
<div class="t" style="font-size:13px;color:#363636;top:55.0px;font-weight:bold;letter-spacing:-0.384px;left:229.6px;">Tên tài sản</div>
<div class="t" style="font-size:13px;color:#363636;top:55.0px;font-weight:bold;letter-spacing:-0.378px;left:389.5px;">Loại tài sản</div>
<div class="t" style="font-size:13px;color:#363636;top:55.0px;font-weight:bold;letter-spacing:-0.386px;left:589.7px;">Loại tài sản kê khai</div>
<div class="t" style="font-size:13px;color:#363636;top:55.0px;font-weight:bold;letter-spacing:-0.496px;left:884.4px;">Hiện trạng sử dụng</div>
<div class="t" style="font-size:13px;color:#363636;top:55.0px;font-weight:bold;letter-spacing:-0.458px;left:774.2px;">Ngày ghi tăng</div>
<div class="fi" style="left:103px;top:83px;width:113px"></div><div class="vl" style="left:191px;top:84px;height:26px;background:#d6d6d6"></div>
<svg style="left:197px;top:90px" width="14" height="14" viewBox="0 0 14 14" fill="none" stroke="#444" stroke-width="1.100" stroke-linejoin="round"><path d="M1 1.500 H13 L8.500 7.500 V13 L5.500 11 V7.500 Z"/></svg>
<div class="fi" style="left:223px;top:83px;width:153px"></div><div class="vl" style="left:351px;top:84px;height:26px;background:#d6d6d6"></div>
<svg style="left:357px;top:90px" width="14" height="14" viewBox="0 0 14 14" fill="none" stroke="#444" stroke-width="1.100" stroke-linejoin="round"><path d="M1 1.500 H13 L8.500 7.500 V13 L5.500 11 V7.500 Z"/></svg>
<div class="fi" style="left:383px;top:83px;width:193px"></div>
<svg style="left:535px;top:94px" width="8" height="5" viewBox="0 0 8 5"><path d="M0.600 0.600 H7.400 L4 4.400 Z" fill="#111" stroke="#111" stroke-width="0.800" stroke-linejoin="round"/></svg>
<svg style="left:555px;top:90px" width="14" height="14" viewBox="0 0 14 14" fill="none" stroke="#444" stroke-width="1.100" stroke-linejoin="round"><path d="M1 1.500 H13 L8.500 7.500 V13 L5.500 11 V7.500 Z"/></svg>
<div class="fi" style="left:583px;top:83px;width:168px"></div>
<svg style="left:735.5999999999999px;top:94px" width="8" height="5" viewBox="0 0 8 5"><path d="M0.600 0.600 H7.400 L4 4.400 Z" fill="#111" stroke="#111" stroke-width="0.800" stroke-linejoin="round"/></svg>
<div class="fi" style="left:758px;top:83px;width:113px"></div>
<svg style="left:850px;top:90px" width="14" height="14" viewBox="0 0 14 14" fill="none" stroke="#444" stroke-width="1.100" stroke-linejoin="round"><path d="M1 1.500 H13 L8.500 7.500 V13 L5.500 11 V7.500 Z"/></svg>
<svg style="left:821px;top:88px" width="18" height="18" viewBox="0 0 18 18" fill="none" stroke="#7884a6" stroke-width="1.100" stroke-linecap="round"><rect x="1" y="2.500" width="16" height="14.500" rx="3.500"/><path d="M5 0.800 V3.500 M13 0.800 V3.500"/><g stroke-width="1.300"><path d="M5 7.500 h0.300 M8.850 7.500 h0.300 M12.700 7.500 h0.300 M5 10.500 h0.300 M8.850 10.500 h0.300 M12.700 10.500 h0.300 M5 13.500 h0.300 M8.850 13.500 h0.300 M12.700 13.500 h0.300"/></g></svg>
<div class="abs" style="left:0;top:115px;width:1138px;height:36px;border-bottom:1px solid #e4e4e4"></div>
<div class="cb" style="left:16px;top:125px"></div>
<div class="t" style="font-size:13px;color:#383838;top:125.8px;left:70.4px;">1</div>
<div class="t" style="font-size:13px;color:#383838;top:125.8px;letter-spacing:-0.472px;left:109.7px;">GTreo</div>
<div class="t" style="font-size:13px;color:#383838;top:125.8px;letter-spacing:-0.203px;left:229.6px;">Bộ giá treo máy chiếu D...</div>
<div class="t" style="font-size:13px;color:#383838;top:125.8px;letter-spacing:-0.121px;left:389.5px;">Máy móc, thiết bị văn phòng ph...</div>
<div class="t" style="font-size:13px;color:#383838;top:125.8px;letter-spacing:-0.150px;left:589.7px;">Tài sản dưới 500 triệu</div>
<div class="t" style="font-size:13px;color:#383838;top:125.8px;letter-spacing:0.342px;left:780.0px;">14/12/2020</div>
<div class="t" style="font-size:13px;color:#4d4f55;top:125.8px;letter-spacing:-0.330px;left:882.8px;">Quản lý nhà nước</div>
<div class="abs" style="left:0;top:151px;width:1138px;height:35px;border-bottom:1px solid #e4e4e4"></div>
<div class="cb" style="left:16px;top:161px"></div>
<div class="t" style="font-size:13px;color:#383838;top:161.5px;left:70.4px;">2</div>
<div class="t" style="font-size:13px;color:#383838;top:161.5px;letter-spacing:-0.770px;left:109.7px;">CMR</div>
<div class="t" style="font-size:13px;color:#383838;top:161.5px;letter-spacing:-0.242px;left:229.6px;">Ca me ra Mi ni - So ny</div>
<div class="t" style="font-size:13px;color:#383838;top:161.5px;letter-spacing:-0.121px;left:389.5px;">Máy móc, thiết bị văn phòng ph...</div>
<div class="t" style="font-size:13px;color:#383838;top:161.5px;letter-spacing:-0.150px;left:589.7px;">Tài sản dưới 500 triệu</div>
<div class="t" style="font-size:13px;color:#383838;top:161.5px;letter-spacing:0.342px;left:780.0px;">14/12/2021</div>
<div class="t" style="font-size:13px;color:#4d4f55;top:161.5px;letter-spacing:-0.309px;left:882.8px;">HĐSN - Sử dụng khác</div>
<div class="abs" style="left:0;top:186px;width:1138px;height:35px;border-bottom:1px solid #e4e4e4"></div>
<div class="cb" style="left:16px;top:196px"></div>
<div class="t" style="font-size:13px;color:#383838;top:196.5px;left:70.4px;">3</div>
<div class="t" style="font-size:13px;color:#383838;top:196.5px;letter-spacing:-0.811px;left:109.7px;">CMR 1</div>
<div class="t" style="font-size:13px;color:#383838;top:196.5px;letter-spacing:-0.191px;left:229.6px;">Camera - 16 cổng</div>
<div class="t" style="font-size:13px;color:#383838;top:196.5px;letter-spacing:-0.121px;left:389.5px;">Máy móc, thiết bị văn phòng ph...</div>
<div class="t" style="font-size:13px;color:#383838;top:196.5px;letter-spacing:-0.150px;left:589.7px;">Tài sản dưới 500 triệu</div>
<div class="t" style="font-size:13px;color:#383838;top:196.5px;letter-spacing:0.439px;left:780.0px;">30/11/2014</div>
<div class="t" style="font-size:13px;color:#4d4f55;top:196.5px;letter-spacing:-0.332px;left:882.8px;">Quản lý nhà nước, HĐSN - Sử dụng khác</div>
<div class="abs" style="left:0;top:221px;width:1138px;height:35px;border-bottom:1px solid #e4e4e4"></div>
<div class="cb" style="left:16px;top:231px"></div>
<div class="t" style="font-size:13px;color:#383838;top:231.5px;left:70.4px;">4</div>
<div class="t" style="font-size:13px;color:#383838;top:231.5px;letter-spacing:-0.297px;left:109.7px;">HA 1</div>
<div class="t" style="font-size:13px;color:#383838;top:231.5px;letter-spacing:-0.088px;left:229.6px;">Hồ ao bên đông</div>
<div class="t" style="font-size:13px;color:#383838;top:231.5px;letter-spacing:-0.068px;left:389.5px;">Các vật kiến trúc khác</div>
<div class="t" style="font-size:13px;color:#383838;top:231.5px;letter-spacing:-0.150px;left:589.7px;">Tài sản dưới 500 triệu</div>
<div class="t" style="font-size:13px;color:#383838;top:231.5px;letter-spacing:0.342px;left:780.0px;">14/12/2021</div>
<div class="t" style="font-size:13px;color:#4d4f55;top:231.5px;letter-spacing:-0.330px;left:882.8px;">Quản lý nhà nước</div>
<div class="abs" style="left:0;top:256px;width:1138px;height:35px;border-bottom:1px solid #e4e4e4"></div>
<div class="cb" style="left:16px;top:266px"></div>
<div class="t" style="font-size:13px;color:#383838;top:266.5px;left:70.4px;">5</div>
<div class="t" style="font-size:13px;color:#383838;top:266.5px;letter-spacing:-0.090px;left:109.7px;">M.IN2022.1</div>
<div class="t" style="font-size:13px;color:#383838;top:266.5px;letter-spacing:-0.210px;left:229.6px;">Máy in Canon</div>
<div class="t" style="font-size:13px;color:#383838;top:266.5px;letter-spacing:-0.099px;left:389.5px;">Máy in</div>
<div class="t" style="font-size:13px;color:#383838;top:266.5px;letter-spacing:-0.150px;left:589.7px;">Tài sản dưới 500 triệu</div>
<div class="t" style="font-size:13px;color:#383838;top:266.5px;letter-spacing:0.342px;left:780.0px;">14/12/2021</div>
<div class="t" style="font-size:13px;color:#4d4f55;top:266.5px;letter-spacing:-0.309px;left:882.8px;">HĐSN - Sử dụng khác</div>
<div class="abs" style="left:0;top:291px;width:1138px;height:35px;border-bottom:1px solid #e4e4e4"></div>
<div class="cb" style="left:16px;top:301px"></div>
<div class="t" style="font-size:13px;color:#383838;top:301.5px;left:70.4px;">6</div>
<div class="t" style="font-size:13px;color:#383838;top:301.5px;letter-spacing:-0.171px;left:109.7px;">M In 6</div>
<div class="t" style="font-size:13px;color:#383838;top:301.5px;letter-spacing:-0.118px;left:229.6px;">Máy in la ze khổ A3</div>
<div class="t" style="font-size:13px;color:#383838;top:301.5px;letter-spacing:-0.099px;left:389.5px;">Máy in</div>
<div class="t" style="font-size:13px;color:#383838;top:301.5px;letter-spacing:-0.150px;left:589.7px;">Tài sản dưới 500 triệu</div>
<div class="t" style="font-size:13px;color:#383838;top:301.5px;letter-spacing:0.342px;left:780.0px;">14/12/2020</div>
<div class="t" style="font-size:13px;color:#4d4f55;top:301.5px;letter-spacing:-0.332px;left:882.8px;">Quản lý nhà nước, HĐSN - Sử dụng khác</div>
<div class="abs" style="left:0;top:326px;width:1138px;height:35px;border-bottom:1px solid #e4e4e4"></div>
<div class="cb" style="left:16px;top:336px"></div>
<div class="t" style="font-size:13px;color:#383838;top:336.5px;left:70.4px;">7</div>
<div class="t" style="font-size:13px;color:#383838;top:336.5px;letter-spacing:-0.180px;left:109.7px;">MPT 03</div>
<div class="t" style="font-size:13px;color:#383838;top:336.5px;letter-spacing:-0.107px;left:229.6px;">Máy potocppy Toshiba ...</div>
<div class="t" style="font-size:13px;color:#383838;top:336.5px;letter-spacing:0.018px;left:389.5px;">Máy photocopy</div>
<div class="t" style="font-size:13px;color:#383838;top:336.5px;letter-spacing:-0.150px;left:589.7px;">Tài sản dưới 500 triệu</div>
<div class="t" style="font-size:13px;color:#383838;top:336.5px;letter-spacing:0.342px;left:780.0px;">14/12/2020</div>
<div class="t" style="font-size:13px;color:#4d4f55;top:336.5px;letter-spacing:-0.330px;left:882.8px;">Quản lý nhà nước</div>
<div class="abs" style="left:0;top:361px;width:1138px;height:35px;border-bottom:1px solid #e4e4e4"></div>
<div class="cb" style="left:16px;top:371px"></div>
<div class="t" style="font-size:13px;color:#383838;top:371.5px;left:70.4px;">8</div>
<div class="t" style="font-size:13px;color:#383838;top:371.5px;letter-spacing:-0.197px;left:109.7px;">MSCAN2022</div>
<div class="t" style="font-size:13px;color:#383838;top:371.5px;letter-spacing:-0.160px;left:229.6px;">Máy quét HP</div>
<div class="t" style="font-size:13px;color:#383838;top:371.5px;letter-spacing:-0.055px;left:389.5px;">Máy scan</div>
<div class="t" style="font-size:13px;color:#383838;top:371.5px;letter-spacing:-0.150px;left:589.7px;">Tài sản dưới 500 triệu</div>
<div class="t" style="font-size:13px;color:#383838;top:371.5px;letter-spacing:0.342px;left:780.0px;">14/12/2021</div>
<div class="t" style="font-size:13px;color:#4d4f55;top:371.5px;letter-spacing:-0.332px;left:882.8px;">Quản lý nhà nước, HĐSN - Sử dụng khác</div>
<div class="abs" style="left:0;top:396px;width:1138px;height:35px;border-bottom:1px solid #e4e4e4"></div>
<div class="cb" style="left:16px;top:406px"></div>
<div class="t" style="font-size:13px;color:#383838;top:406.5px;left:70.4px;">9</div>
<div class="t" style="font-size:13px;color:#383838;top:406.5px;letter-spacing:-0.061px;left:109.7px;">May quet</div>
<div class="t" style="font-size:13px;color:#383838;top:406.5px;letter-spacing:-0.124px;left:229.6px;">Máy quét Kodal i2420 c...</div>
<div class="t" style="font-size:13px;color:#383838;top:406.5px;letter-spacing:-0.121px;left:389.5px;">Máy móc, thiết bị văn phòng ph...</div>
<div class="t" style="font-size:13px;color:#383838;top:406.5px;letter-spacing:-0.150px;left:589.7px;">Tài sản dưới 500 triệu</div>
<div class="t" style="font-size:13px;color:#383838;top:406.5px;letter-spacing:0.342px;left:780.0px;">14/12/2020</div>
<div class="t" style="font-size:13px;color:#4d4f55;top:406.5px;letter-spacing:-0.330px;left:882.8px;">Quản lý nhà nước</div>
<div class="abs" style="left:0;top:431px;width:1138px;height:35px;border-bottom:1px solid #e4e4e4"></div>
<div class="cb" style="left:16px;top:441px"></div>
<div class="t" style="font-size:13px;color:#383838;top:441.5px;left:66.8px;">10</div>
<div class="t" style="font-size:13px;color:#383838;top:441.5px;letter-spacing:-0.342px;left:109.7px;">NXGV-2017</div>
<div class="t" style="font-size:13px;color:#383838;top:441.5px;letter-spacing:-0.260px;left:229.6px;">Nhà để xe giáo viên trướ...</div>
<div class="t" style="font-size:13px;color:#383838;top:441.5px;letter-spacing:-0.068px;left:389.5px;">Các vật kiến trúc khác</div>
<div class="t" style="font-size:13px;color:#383838;top:441.5px;letter-spacing:-0.150px;left:589.7px;">Tài sản dưới 500 triệu</div>
<div class="t" style="font-size:13px;color:#383838;top:441.5px;letter-spacing:0.342px;left:780.0px;">14/12/2020</div>
<div class="t" style="font-size:13px;color:#4d4f55;top:441.5px;letter-spacing:-0.309px;left:882.8px;">HĐSN - Sử dụng khác</div>
<div class="abs" style="left:0;top:466px;width:1138px;height:35px;background:#e8ebfd;border-bottom:1px solid #e4e4e4"></div>
<div class="cb" style="left:16px;top:476px"></div>
<div class="t" style="font-size:13px;color:#383838;top:476.5px;left:67.2px;">11</div>
<div class="t" style="font-size:13px;color:#383838;top:476.5px;letter-spacing:-0.342px;left:109.7px;">NXHS-2017</div>
<div class="t" style="font-size:13px;color:#383838;top:476.5px;letter-spacing:-0.186px;left:229.6px;">Nhà xe học sinh phía tâ...</div>
<div class="t" style="font-size:13px;color:#383838;top:476.5px;letter-spacing:-0.068px;left:389.5px;">Các vật kiến trúc khác</div>
<div class="t" style="font-size:13px;color:#383838;top:476.5px;letter-spacing:-0.150px;left:589.7px;">Tài sản dưới 500 triệu</div>
<div class="t" style="font-size:13px;color:#383838;top:476.5px;letter-spacing:0.342px;left:780.0px;">14/12/2021</div>
<div class="abs" style="left:0;top:501px;width:1138px;height:7px;background:#fff"></div>
<div class="vl" style="left:49px;top:44px;height:464px"></div>
<div class="vl" style="left:99px;top:44px;height:464px"></div>
<div class="vl" style="left:219px;top:44px;height:464px"></div>
<div class="vl" style="left:379px;top:44px;height:464px"></div>
<div class="vl" style="left:579px;top:44px;height:464px"></div>
<div class="vl" style="left:754px;top:44px;height:464px"></div>
<div class="vl" style="left:874px;top:44px;height:464px"></div>
<div class="hl" style="left:0;top:508px;width:1140px;background:#dcdcdc"></div>
<div class="abs" style="left:1134px;top:118px;width:3px;height:119px;background:#c9c9c9;border-radius:2px"></div>
<div class="abs" style="left:875px;top:466px;width:262px;height:33px;border:1px solid #4262f0;border-radius:3px;background:#fff"></div>
<div class="abs" style="left:877px;top:470px;width:112.500px;height:25px;background:#f2f2f2;border-radius:12.500px"></div>
<div class="t" style="font-size:11px;color:#2d2d2d;top:477.2px;letter-spacing:-0.267px;left:880.7px;">Quản lý nhà nước</div>
<svg style="left:973px;top:476.29999999999995px" width="12" height="12" viewBox="0 0 12 12"><circle cx="6" cy="6" r="6" fill="#5a5a5a"/><path d="M3.700 3.700 L8.300 8.300 M8.300 3.700 L3.700 8.300" stroke="#fff" stroke-width="1.200" stroke-linecap="round"/></svg>
<svg style="left:1116.7px;top:482px" width="8" height="5" viewBox="0 0 8 5"><path d="M0.600 0.600 H7.400 L4 4.400 Z" fill="#4a4f5c" stroke="#4a4f5c" stroke-width="0.800" stroke-linejoin="round"/></svg>
<div class="t" style="left:10px;top:520.5px;font-size:13px;color:#383838;letter-spacing:-0.102px;white-space:pre">Tổng số: <b>36</b> bản ghi</div>
<div class="t" style="font-size:13px;color:#383838;top:520.5px;letter-spacing:0.039px;left:871.6px;">Số dòng/trang</div>
<div class="t" style="font-size:13px;color:#222;top:520.5px;letter-spacing:-0.468px;left:965.7px;">100</div>
<svg style="left:993px;top:524.5px" width="9" height="6" viewBox="0 0 9 6" fill="none" stroke="#111" stroke-width="1.700" stroke-linecap="round" stroke-linejoin="round"><path d="M1 1 L4.500 4.800 L8 1"/></svg>
<div class="t" style="font-size:11px;color:#9a9a9a;top:522.0px;left:1035.8px;">&lt;</div>
<div class="t" style="font-size:13px;color:#383838;top:520.5px;letter-spacing:-0.397px;left:1053.0px;">Trang</div>
<div class="t" style="font-size:13px;color:#222;top:520.5px;left:1099.9px;">1</div>
<div class="t" style="font-size:11px;color:#9a9a9a;top:522.0px;left:1122.8px;">&gt;</div>
<div class="hl" style="left:0;top:544px;width:1140px;background:#dcdcdc"></div>
<div class="abs" style="left:924px;top:554px;width:72px;height:32px;border:1px solid #d0d0d0;border-radius:4px;background:#fff"></div>
<div class="t" style="font-size:13px;color:#1f1f1f;top:562.5px;letter-spacing:-0.684px;left:941.3px;">Hủy bỏ</div>
<div class="abs" style="left:1004px;top:554px;width:120px;height:32px;border-radius:4px;background:#4262f0"></div>
<div class="t" style="font-size:13px;color:#fff;top:562.5px;font-weight:bold;letter-spacing:-0.950px;left:1032.4px;">Hoàn thành</div>
</div>
<div class="abs" style="left:1192px;top:255px;width:270px;height:395px;border:4px solid #e0181b"></div>
<div class="abs" style="left:1320px;top:683px;width:135px;height:51px;border:4px solid #e0181b"></div>
</body></html>
